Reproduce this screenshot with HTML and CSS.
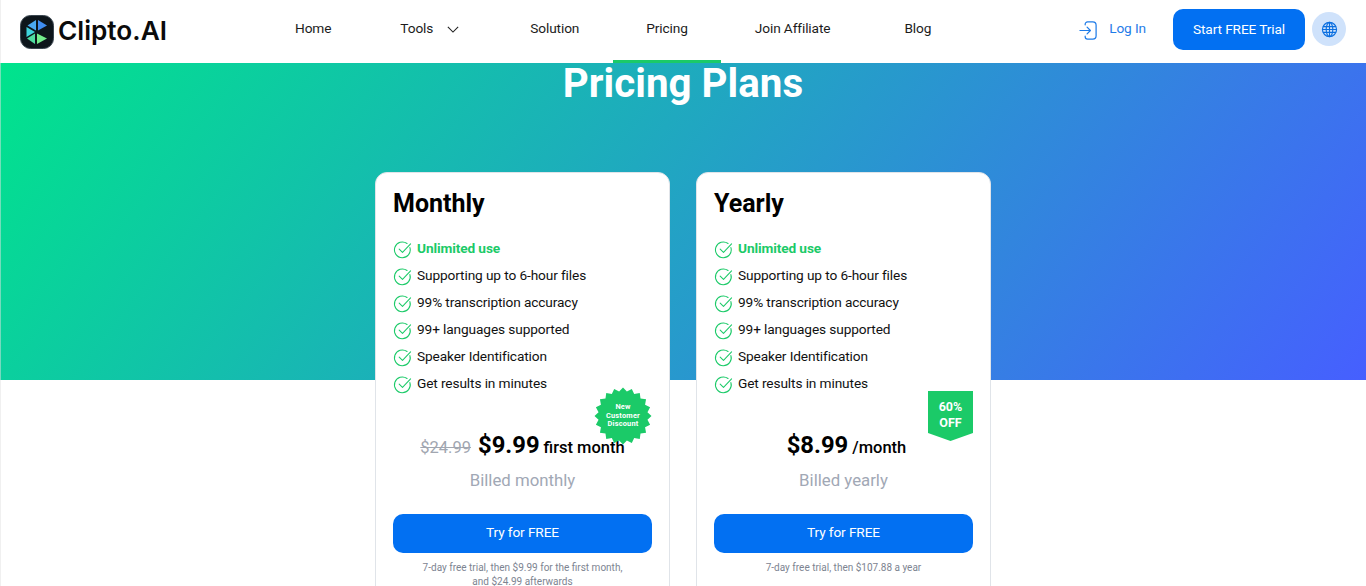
FILE: index.html
```html
<!DOCTYPE html>
<html lang="en">
<head>
<meta charset="utf-8">
<title>Clipto.AI Pricing</title>
<link rel="stylesheet" href="styles.css">
</head>
<body>
<header class="topbar">
  <a class="brand">
    <svg class="brand-icon" viewBox="0 0 34 34" width="34" height="34">
      <rect x="0.5" y="0.5" width="33" height="33" rx="10" fill="#0d151b" stroke="#3a4650" stroke-width="1"/>
      <path d="M18 5 L27 10.500 L18 15.500Z" fill="#3f8df2"/>
      <path d="M16 5 L16 15.500 L7.500 10.500Z" fill="#4aa8f2"/>
      <path d="M6.500 12 L15 17 L6.500 22Z" fill="#3fd3dc"/>
      <path d="M17 18.500 L27 23.500 L17 29Z" fill="#74ec8c"/>
      <path d="M15 18.500 L15 29 L7 23.500Z" fill="#4fdca0"/>
    </svg>
    <span class="brand-name">Clipto.AI</span>
  </a>
  <nav class="nav">
    <a class="nav-link nav-home">Home</a>
    <a class="nav-link nav-tools">Tools
      <svg class="chevron" viewBox="0 0 14 8" width="12" height="7"><path d="M1 1l6 6 6-6" fill="none" stroke="#222" stroke-width="1.300"/></svg>
    </a>
    <a class="nav-link nav-solution">Solution</a>
    <a class="nav-link nav-active">Pricing</a>
    <a class="nav-link nav-join">Join Affiliate</a>
    <a class="nav-link nav-blog">Blog</a>
  </nav>
  <div class="actions">
    <a class="login">
      <svg viewBox="0 0 20 20" width="19" height="19" fill="none" stroke="#1f7ce8" stroke-width="1.300" stroke-linecap="round" stroke-linejoin="round"><path d="M1 10h11M8.500 6.500l3.500 3.500-3.500 3.500"/><path d="M6.500 4V3.500C6.500 2 7.500 1 9 1h5.500c2.200 0 3.500 1.500 3.500 3.500v11c0 2-1.300 3.500-3.500 3.500H9c-1.500 0-2.500-1-2.500-2.500V16"/></svg>
      <span class="login-text">Log In</span>
    </a>
    <a class="trial">Start FREE Trial</a>
    <span class="globe">
      <svg viewBox="0 0 18 18" width="17" height="17" fill="none" stroke="#0b6fe0" stroke-width="1.200"><circle cx="9" cy="9" r="7.500"/><ellipse cx="9" cy="9" rx="3.500" ry="7.500"/><path d="M9 1.500v15M2 6h14M2 12h14M1.500 9h15"/></svg>
    </span>
  </div>
</header>
<main class="page">
  <h1 class="title">Pricing Plans</h1>
  <section class="plans">
    <article class="plan">
      <h2 class="plan-name">Monthly</h2>
      <ul class="features">
        <li class="feature feature-hot"><svg class="check" viewBox="0 0 20 20"><path d="M17.800 8a8.300 8.300 0 1 1-3-4.300"/><path d="M6.500 9.500l3.500 3.500 8.500-9"/></svg>Unlimited use</li>
        <li class="feature"><svg class="check" viewBox="0 0 20 20"><path d="M17.800 8a8.300 8.300 0 1 1-3-4.300"/><path d="M6.500 9.500l3.500 3.500 8.500-9"/></svg>Supporting up to 6-hour files</li>
        <li class="feature"><svg class="check" viewBox="0 0 20 20"><path d="M17.800 8a8.300 8.300 0 1 1-3-4.300"/><path d="M6.500 9.500l3.500 3.500 8.500-9"/></svg>99% transcription accuracy</li>
        <li class="feature"><svg class="check" viewBox="0 0 20 20"><path d="M17.800 8a8.300 8.300 0 1 1-3-4.300"/><path d="M6.500 9.500l3.500 3.500 8.500-9"/></svg>99+ languages supported</li>
        <li class="feature"><svg class="check" viewBox="0 0 20 20"><path d="M17.800 8a8.300 8.300 0 1 1-3-4.300"/><path d="M6.500 9.500l3.500 3.500 8.500-9"/></svg>Speaker Identification</li>
        <li class="feature"><svg class="check" viewBox="0 0 20 20"><path d="M17.800 8a8.300 8.300 0 1 1-3-4.300"/><path d="M6.500 9.500l3.500 3.500 8.500-9"/></svg>Get results in minutes</li>
      </ul>
      <div class="starburst">
        <svg class="starburst-shape" viewBox="-28.500 -28.500 57 57" width="58" height="58"><polygon fill="#1bca68" points="28.000,0.000 24.038,3.807 26.631,8.653 21.683,10.990 22.653,16.458 17.210,17.210 16.458,22.653 10.990,21.683 8.653,26.631 3.807,24.038 0.000,28.000 -3.807,24.038 -8.653,26.631 -10.990,21.683 -16.458,22.653 -17.210,17.210 -22.653,16.458 -21.683,10.990 -26.631,8.653 -24.038,3.807 -28.000,0.000 -24.038,-3.807 -26.631,-8.653 -21.683,-10.990 -22.653,-16.458 -17.210,-17.210 -16.458,-22.653 -10.990,-21.683 -8.653,-26.631 -3.807,-24.038 0.000,-28.000 3.807,-24.038 8.653,-26.631 10.990,-21.683 16.458,-22.653 17.210,-17.210 22.653,-16.458 21.683,-10.990 26.631,-8.653 24.038,-3.807"/></svg>
        <span class="starburst-text">New<br>Customer<br>Discount</span>
      </div>
      <p class="price"><s class="old">$24.99</s> <b class="amount">$9.99</b> <span class="unit">first month</span></p>
      <p class="billed">Billed monthly</p>
      <a class="cta">Try for FREE</a>
      <p class="fine">7-day free trial, then $9.99 for the first month,<br>and $24.99 afterwards</p>
    </article>
    <article class="plan">
      <h2 class="plan-name">Yearly</h2>
      <ul class="features">
        <li class="feature feature-hot"><svg class="check" viewBox="0 0 20 20"><path d="M17.800 8a8.300 8.300 0 1 1-3-4.300"/><path d="M6.500 9.500l3.500 3.500 8.500-9"/></svg>Unlimited use</li>
        <li class="feature"><svg class="check" viewBox="0 0 20 20"><path d="M17.800 8a8.300 8.300 0 1 1-3-4.300"/><path d="M6.500 9.500l3.500 3.500 8.500-9"/></svg>Supporting up to 6-hour files</li>
        <li class="feature"><svg class="check" viewBox="0 0 20 20"><path d="M17.800 8a8.300 8.300 0 1 1-3-4.300"/><path d="M6.500 9.500l3.500 3.500 8.500-9"/></svg>99% transcription accuracy</li>
        <li class="feature"><svg class="check" viewBox="0 0 20 20"><path d="M17.800 8a8.300 8.300 0 1 1-3-4.300"/><path d="M6.500 9.500l3.500 3.500 8.500-9"/></svg>99+ languages supported</li>
        <li class="feature"><svg class="check" viewBox="0 0 20 20"><path d="M17.800 8a8.300 8.300 0 1 1-3-4.300"/><path d="M6.500 9.500l3.500 3.500 8.500-9"/></svg>Speaker Identification</li>
        <li class="feature"><svg class="check" viewBox="0 0 20 20"><path d="M17.800 8a8.300 8.300 0 1 1-3-4.300"/><path d="M6.500 9.500l3.500 3.500 8.500-9"/></svg>Get results in minutes</li>
      </ul>
      <div class="ribbon">60%<br>OFF</div>
      <p class="price price-yearly"><b class="amount">$8.99</b> <span class="unit">/month</span></p>
      <p class="billed">Billed yearly</p>
      <a class="cta">Try for FREE</a>
      <p class="fine">7-day free trial, then $107.88 a year</p>
    </article>
  </section>
</main>
</body>
</html>
```

FILE: styles.css
```css
* { box-sizing: border-box; }
html, body { margin: 0; height: 586px; overflow: hidden; background: #fff; }
body { font-family: Roboto, "Liberation Sans", sans-serif; color: #000; }
p, h1, h2, ul { margin: 0; padding: 0; }

.topbar { height: 63px; display: flex; align-items: center; padding: 0 20px; background: #fff; box-shadow: inset 1px 0 0 rgba(225, 225, 225, 0.5); }
.brand { display: flex; align-items: center; gap: 4px; width: 241px; }
.brand-icon { display: block; }
.brand-name { font-family: Inter, sans-serif; font-size: 26.200px; font-weight: 600; color: #0b0b0b; margin-bottom: 2px; }

.nav { display: flex; height: 63px; align-items: stretch; font-size: 13.700px; letter-spacing: -0.120px; }
.nav-link { display: flex; align-items: center; color: #1c1c1c; padding: 0 33px 4px; border-bottom: 3px solid transparent; }
.nav-home { padding: 0 34.500px 4px 34px; }
.nav-tools { gap: 14px; padding: 0 35.500px 4px 34.500px; }
.nav-solution { padding: 0 34px 4px 35.500px; }
.nav-active { padding: 0 33px 4px; border-bottom-color: #1bca68; }
.nav-join { padding: 0 36.500px 4px 34px; }
.nav-blog { padding: 0 37px 4px 37.500px; }
.chevron { display: block; margin-top: 2px; }

.actions { margin-left: auto; display: flex; align-items: center; padding-bottom: 5px; }
.login { display: flex; align-items: center; gap: 11px; font-size: 13.700px; letter-spacing: -0.120px; color: #1f7ce8; margin-right: 27px; }
.login svg { display: block; margin-top: 2px; }
.login-text { margin-bottom: 2px; }
.trial { display: flex; align-items: center; justify-content: center; width: 132px; height: 41px; border-radius: 10px; background: #0270f2; color: #fff; font-size: 13.700px; letter-spacing: -0.120px; }
.globe { width: 34px; height: 34px; margin-left: 7px; border-radius: 50%; background: #cfe2fb; display: flex; align-items: center; justify-content: center; }

.page { height: 523px; background: linear-gradient(128deg, #00e48c, #465fff) no-repeat; background-size: 100% 317px; display: flex; flex-direction: column; align-items: center; box-shadow: inset 1px 0 0 rgba(225, 225, 225, 0.5); }
.title { font-size: 40.320px; line-height: 40px; font-weight: 700; color: #fff; margin-top: 1px; }

.plans { display: flex; gap: 26px; margin-top: 68px; align-items: flex-start; }
.plan { position: relative; width: 295px; height: 440px; background: #fff; border: 1px solid #e0e4e9; border-radius: 12px; padding: 16px 17px 0; display: flex; flex-direction: column; }
.plan-name { font-size: 25px; line-height: 30px; font-weight: 700; }

.features { list-style: none; margin-top: 15.500px; }
.feature { display: flex; align-items: center; gap: 5px; height: 27px; font-size: 13.700px; letter-spacing: -0.120px; color: #111; }
.feature-hot { color: #1bca68; font-weight: 700; }
.check { width: 19px; height: 19px; flex: none; fill: none; stroke: #1bca68; stroke-width: 1.100; stroke-linecap: round; stroke-linejoin: round; margin-top: 2px; }

.starburst { position: absolute; left: 218px; top: 214px; width: 58px; height: 58px; display: flex; align-items: center; justify-content: center; }
.starburst-shape { position: absolute; inset: 0; }
.starburst-text { position: relative; color: #fff; font-size: 7.400px; line-height: 8.500px; font-weight: 700; text-align: center; letter-spacing: 0.200px; }
.ribbon { position: absolute; left: 231px; top: 218px; width: 45px; height: 50px; padding-top: 8px; background: #1bca68; color: #fff; font-size: 12.500px; line-height: 16px; font-weight: 700; text-align: center; clip-path: polygon(0 0, 100% 0, 100% 84%, 50% 100%, 0 84%); }

.price { margin-top: 33.500px; display: flex; justify-content: center; align-items: baseline; line-height: 30px; }
.price-yearly { padding-left: 6px; }
.old { font-size: 16.500px; color: #a1a6b0; margin-right: 7px; }
.amount { font-size: 23.800px; font-weight: 700; margin-right: 4px; }
.unit { font-size: 16.500px; font-weight: 500; }
.billed { margin-top: 4.500px; text-align: center; font-size: 16.800px; line-height: 24px; color: #a1a8b5; }
.cta { margin-top: 22.500px; height: 39px; padding-bottom: 4px; border-radius: 10px; background: #0270f2; color: #fff; font-size: 13.700px; letter-spacing: -0.120px; display: flex; align-items: center; justify-content: center; }
.fine { margin-top: 8px; text-align: center; font-size: 10px; line-height: 14px; color: #7d8491; }
```
